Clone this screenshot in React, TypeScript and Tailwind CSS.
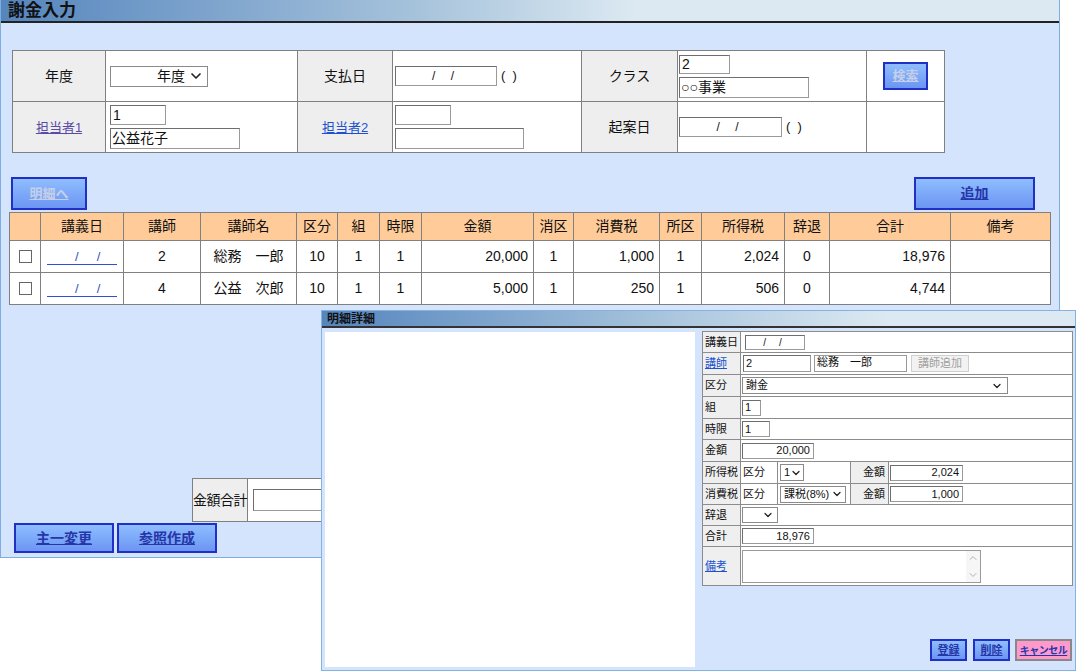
import { ChevronDown, ChevronUp } from 'lucide-react';

const FONT = "font-['Liberation_Sans','Noto_Sans_CJK_JP',sans-serif]";
const LABEL = 'bg-[#eeeeee] border border-[#808080] text-center align-middle';
const CELL = 'bg-white border border-[#808080] align-middle';
const BOX = 'bg-white border border-[#9a9a9a] border-t-[#6e6e6e] border-l-[#6e6e6e]';

function Box({ className = '', children }: { className?: string; children?: React.ReactNode }) {
  return <div className={`${BOX} flex items-center whitespace-nowrap ${className}`}>{children}</div>;
}

function Drop({ className = '', text, icon = 'w-4 h-4' }: { className?: string; text?: string; icon?: string }) {
  return (
    <div className={`bg-white border border-[#8a8a8a] flex items-center whitespace-nowrap ${className}`}>
      <span className="flex-1 truncate">{text}</span>
      <ChevronDown className={`${icon} text-[#222] shrink-0`} strokeWidth={2.5} />
    </div>
  );
}

function BlueBtn({ label, className = '', dim = false }: { label: string; className?: string; dim?: boolean }) {
  return (
    <div
      className={`flex items-center justify-center whitespace-nowrap border-2 border-[#2030c4] bg-linear-to-b from-[#8fbdff] to-[#6c95f2] ${className}`}
    >
      <span className={`underline font-bold ${dim ? 'text-[#c5d0e8]' : 'text-[#2536a8]'}`}>{label}</span>
    </div>
  );
}

function DateLink() {
  return (
    <span className="inline-block w-[70px] border-b border-[#2f4fd0] text-[#2f4fd0] text-[13px] leading-[14px] pl-[28px] text-left whitespace-nowrap">
      /&nbsp;&nbsp;&nbsp;&nbsp;&nbsp;/
    </span>
  );
}

const rows = [
  { teacher: '2', name: '総務　一郎', kubun: '10', kumi: '1', jigen: '1', amount: '20,000', shoku: '1', tax: '1,000', shoto: '1', income: '2,024', jitai: '0', total: '18,976' },
  { teacher: '4', name: '公益　次郎', kubun: '10', kumi: '1', jigen: '1', amount: '5,000', shoku: '1', tax: '250', shoto: '1', income: '506', jitai: '0', total: '4,744' },
];

const headers = ['', '講義日', '講師', '講師名', '区分', '組', '時限', '金額', '消区', '消費税', '所区', '所得税', '辞退', '合計', '備考'];

function MainWindow() {
  return (
    <div className="w-[1060px] h-[558px] border border-t-0 border-[#7eaee0] bg-[#d4e4fc] flex flex-col">
      {/* title */}
      <div className="h-[23px] shrink-0 border-b-2 border-[#222] bg-linear-to-r from-[#5585bd] via-[#a8c4dc] via-40% to-[#dce9f2] to-60% flex items-center pl-[7px]">
        <span className="text-[17px] font-bold text-[#111] leading-none">謝金入力</span>
      </div>

      {/* search form */}
      <table className="mt-[27px] ml-[11px] border-collapse table-fixed w-[933px] text-[14px] text-[#111]">
        <colgroup>
          <col className="w-[93px]" />
          <col className="w-[192px]" />
          <col className="w-[95px]" />
          <col className="w-[189px]" />
          <col className="w-[96px]" />
          <col className="w-[189px]" />
          <col className="w-[78px]" />
        </colgroup>
        <tbody>
          <tr className="h-[51px]">
            <td className={LABEL}>年度</td>
            <td className={CELL}>
              <Drop className="ml-[4px] w-[98px] h-[21px] pl-[46px] pr-[3px] text-[14px]" text="年度" />
            </td>
            <td className={LABEL}>支払日</td>
            <td className={CELL}>
              <div className="flex items-center ml-[2px]">
                <Box className="w-[102px] h-[20px] justify-center text-[12px] tracking-[6px]">/ /</Box>
                <span className="ml-[4px] text-[13px]">(&nbsp;&nbsp;)</span>
              </div>
            </td>
            <td className={LABEL}>クラス</td>
            <td className={CELL}>
              <div className="flex flex-col gap-[3px] ml-[1px]">
                <Box className="w-[51px] h-[19px] pl-[2px] text-[14px]">2</Box>
                <Box className="w-[130px] h-[21px] pl-[1px] text-[14px]">○○事業</Box>
              </div>
            </td>
            <td className={CELL}>
              <div className="flex justify-center">
                <BlueBtn label="検索" dim className="w-[45px] h-[28px] text-[13px]" />
              </div>
            </td>
          </tr>
          <tr className="h-[51px]">
            <td className={LABEL}>
              <span className="underline text-[#5a4aa6] text-[13px]">担当者1</span>
            </td>
            <td className={CELL}>
              <div className="flex flex-col gap-[3px] ml-[4px]">
                <Box className="w-[56px] h-[20px] pl-[2px] text-[14px]">1</Box>
                <Box className="w-[130px] h-[21px] pl-[1px] text-[14px]">公益花子</Box>
              </div>
            </td>
            <td className={LABEL}>
              <span className="underline text-[#2050d0] text-[13px]">担当者2</span>
            </td>
            <td className={CELL}>
              <div className="flex flex-col gap-[3px] ml-[2px]">
                <Box className="w-[56px] h-[20px]" />
                <Box className="w-[129px] h-[21px]" />
              </div>
            </td>
            <td className={LABEL}>起案日</td>
            <td className={CELL}>
              <div className="flex items-center ml-[1px]">
                <Box className="w-[103px] h-[20px] justify-center text-[12px] tracking-[6px]">/ /</Box>
                <span className="ml-[4px] text-[13px]">(&nbsp;&nbsp;)</span>
              </div>
            </td>
            <td className={CELL} />
          </tr>
        </tbody>
      </table>

      {/* action buttons */}
      <div className="mt-[24px] ml-[10px] mr-[24px] flex justify-between">
        <BlueBtn label="明細へ" dim className="w-[76px] h-[33px] text-[13px]" />
        <BlueBtn label="追加" className="w-[121px] h-[33px] text-[14px]" />
      </div>

      {/* list */}
      <table className="mt-[2px] ml-[8px] border-collapse table-fixed w-[1041px] text-[14px] text-[#111]">
        <colgroup>
          {[31, 83, 77, 96, 41, 42, 42, 112, 40, 86, 42, 83, 45, 121, 100].map((w, i) => (
            <col key={i} style={{ width: w }} />
          ))}
        </colgroup>
        <thead>
          <tr className="h-[28px] bg-[#ffcc99]">
            {headers.map((h, i) => (
              <th key={i} className="border border-[#808080] font-normal text-center">
                {h}
              </th>
            ))}
          </tr>
        </thead>
        <tbody>
          {rows.map((r, i) => (
            <tr key={i} className="h-[32px] bg-white">
              <td className="border border-[#808080] text-center">
                <div className="w-[13px] h-[13px] border border-[#666] bg-white mx-auto" />
              </td>
              <td className="border border-[#808080] text-center">
                <DateLink />
              </td>
              <td className="border border-[#808080] text-center">{r.teacher}</td>
              <td className="border border-[#808080] text-center">{r.name}</td>
              <td className="border border-[#808080] text-center">{r.kubun}</td>
              <td className="border border-[#808080] text-center">{r.kumi}</td>
              <td className="border border-[#808080] text-center">{r.jigen}</td>
              <td className="border border-[#808080] text-right pr-[5px]">{r.amount}</td>
              <td className="border border-[#808080] text-center">{r.shoku}</td>
              <td className="border border-[#808080] text-right pr-[5px]">{r.tax}</td>
              <td className="border border-[#808080] text-center">{r.shoto}</td>
              <td className="border border-[#808080] text-right pr-[5px]">{r.income}</td>
              <td className="border border-[#808080] text-center">{r.jitai}</td>
              <td className="border border-[#808080] text-right pr-[5px]">{r.total}</td>
              <td className="border border-[#808080]" />
            </tr>
          ))}
        </tbody>
      </table>

      {/* total */}
      <div className="mt-[173px] ml-[191px] flex h-[44px] w-[160px] border border-[#808080] text-[14px] text-[#111]">
        <div className="w-[67px] bg-[#eeeeee] border-r border-[#808080] flex items-center justify-center whitespace-nowrap tracking-[-0.5px]">
          金額合計
        </div>
        <div className="flex-1 bg-white flex items-center pl-[5px]">
          <Box className="w-[100px] h-[22px]" />
        </div>
      </div>

      {/* bottom buttons */}
      <div className="mt-[1px] ml-[13px] flex gap-[3px]">
        <BlueBtn label="主一変更" className="w-[100px] h-[30px] text-[14px]" />
        <BlueBtn label="参照作成" className="w-[100px] h-[30px] text-[14px]" />
      </div>
    </div>
  );
}

const FL = 'bg-[#efefef] border border-[#8c8c8c] pl-[2px] align-middle whitespace-nowrap';
const FV = 'bg-white border border-[#8c8c8c] align-middle';

function DetailDialog() {
  return (
    <div className="absolute left-[321px] top-[310px] w-[755px] h-[361px] border border-[#86b2e0] bg-[#d4e4fc] flex flex-col">
      <div className="h-[17px] shrink-0 border-b-2 border-[#333] bg-linear-to-r from-[#5585bd] via-[#a8c4dc] via-45% to-[#dce9f2] to-75% flex items-center pl-[5px]">
        <span className="text-[12px] font-bold text-[#111] leading-none">明細詳細</span>
      </div>
      <div className="flex flex-1 min-h-0">
        <div className="ml-[3px] mt-[4px] w-[370px] h-[335px] bg-white" />
        <div className="ml-[7px] flex flex-col flex-1">
          <table className="mt-[3px] border-collapse table-fixed w-[370px] text-[11px] text-[#111]">
            <colgroup>
              <col className="w-[38px]" />
              <col className="w-[332px]" />
            </colgroup>
            <tbody>
              <tr className="h-[21px]">
                <td className={FL}>講義日</td>
                <td className={FV}>
                  <Box className="ml-[4px] w-[60px] h-[15px] justify-center tracking-[5px] text-[10px]">/ /</Box>
                </td>
              </tr>
              <tr className="h-[22px]">
                <td className={FL}>
                  <span className="underline text-[#2050d0]">講師</span>
                </td>
                <td className={FV}>
                  <div className="flex items-center ml-[2px] gap-[3px]">
                    <Box className="w-[68px] h-[17px] pl-[2px]">2</Box>
                    <div className="w-[93px] h-[17px] border border-[#9a9a9a] bg-white pl-[2px] leading-[13px] whitespace-nowrap">総務　一郎</div>
                    <div className="ml-[1px] w-[58px] h-[17px] border border-[#cfcfcf] bg-[#f2f2f2] text-[#a0a0a0] flex items-center justify-center whitespace-nowrap">
                      講師追加
                    </div>
                  </div>
                </td>
              </tr>
              <tr className="h-[22px]">
                <td className={FL}>区分</td>
                <td className={FV}>
                  <Drop className="ml-[1px] w-[266px] h-[17px] pl-[3px] pr-[4px]" text="謝金" icon="w-3 h-3" />
                </td>
              </tr>
              <tr className="h-[22px]">
                <td className={FL}>組</td>
                <td className={FV}>
                  <Box className="ml-[1px] w-[19px] h-[16px] pl-[2px]">1</Box>
                </td>
              </tr>
              <tr className="h-[21px]">
                <td className={FL}>時限</td>
                <td className={FV}>
                  <Box className="ml-[1px] w-[28px] h-[16px] pl-[2px]">1</Box>
                </td>
              </tr>
              <tr className="h-[22px]">
                <td className={FL}>金額</td>
                <td className={FV}>
                  <Box className="ml-[1px] w-[72px] h-[16px] justify-end pr-[3px]">20,000</Box>
                </td>
              </tr>
              <tr className="h-[22px]">
                <td className={FL}>所得税</td>
                <td className="bg-white border border-[#8c8c8c] p-0">
                  <div className="flex h-[21px] items-stretch">
                    <div className="w-[37px] border-r border-[#8c8c8c] flex items-center pl-[2px]">区分</div>
                    <div className="w-[73px] border-r border-[#8c8c8c] flex items-center pl-[2px]">
                      <Drop className="w-[24px] h-[17px] pl-[3px] pr-[1px]" text="1" icon="w-3 h-3" />
                    </div>
                    <div className="w-[38px] bg-[#efefef] border-r border-[#8c8c8c] flex items-center justify-end pr-[3px]">金額</div>
                    <div className="flex-1 flex items-center pl-[1px]">
                      <Box className="w-[73px] h-[16px] justify-end pr-[3px]">2,024</Box>
                    </div>
                  </div>
                </td>
              </tr>
              <tr className="h-[21px]">
                <td className={FL}>消費税</td>
                <td className="bg-white border border-[#8c8c8c] p-0">
                  <div className="flex h-[20px] items-stretch">
                    <div className="w-[37px] border-r border-[#8c8c8c] flex items-center pl-[2px]">区分</div>
                    <div className="w-[73px] border-r border-[#8c8c8c] flex items-center pl-[2px]">
                      <Drop className="w-[66px] h-[17px] pl-[3px] pr-[2px]" text="課税(8%)" icon="w-3 h-3" />
                    </div>
                    <div className="w-[38px] bg-[#efefef] border-r border-[#8c8c8c] flex items-center justify-end pr-[3px]">金額</div>
                    <div className="flex-1 flex items-center pl-[1px]">
                      <Box className="w-[73px] h-[16px] justify-end pr-[3px]">1,000</Box>
                    </div>
                  </div>
                </td>
              </tr>
              <tr className="h-[21px]">
                <td className={FL}>辞退</td>
                <td className={FV}>
                  <Drop className="ml-[1px] w-[36px] h-[16px] pl-[3px] pr-[3px]" text="" icon="w-3 h-3" />
                </td>
              </tr>
              <tr className="h-[21px]">
                <td className={FL}>合計</td>
                <td className={FV}>
                  <Box className="ml-[1px] w-[72px] h-[16px] justify-end pr-[3px]">18,976</Box>
                </td>
              </tr>
              <tr className="h-[39px]">
                <td className={FL}>
                  <span className="underline text-[#2050d0]">備考</span>
                </td>
                <td className={FV}>
                  <div className="ml-[1px] w-[239px] h-[33px] border border-[#9a9a9a] bg-white flex justify-end">
                    <div className="w-[14px] flex flex-col items-center justify-between py-[1px] bg-[#f6f6f6]">
                      <ChevronUp className="w-3 h-3 text-[#b0b0b0]" />
                      <ChevronDown className="w-3 h-3 text-[#b0b0b0]" />
                    </div>
                  </div>
                </td>
              </tr>
            </tbody>
          </table>
          <div className="flex-1" />
          <div className="mb-[9px] mr-[3px] flex justify-end gap-[6px] text-[11px]">
            <BlueBtn label="登録" className="w-[37px] h-[22px]" />
            <BlueBtn label="削除" className="w-[37px] h-[22px] mr-[-1px]" />
            <div className="w-[57px] h-[22px] border-2 border-[#888] bg-[#ff99cc] flex items-center justify-center whitespace-nowrap">
              <span className="underline font-bold text-[#2536a8] text-[10px] tracking-[-0.5px]">キャンセル</span>
            </div>
          </div>
        </div>
      </div>
    </div>
  );
}

export default function App() {
  return (
    <div className={`relative w-[1076px] h-[671px] bg-white overflow-hidden ${FONT}`}>
      <MainWindow />
      <DetailDialog />
    </div>
  );
}
